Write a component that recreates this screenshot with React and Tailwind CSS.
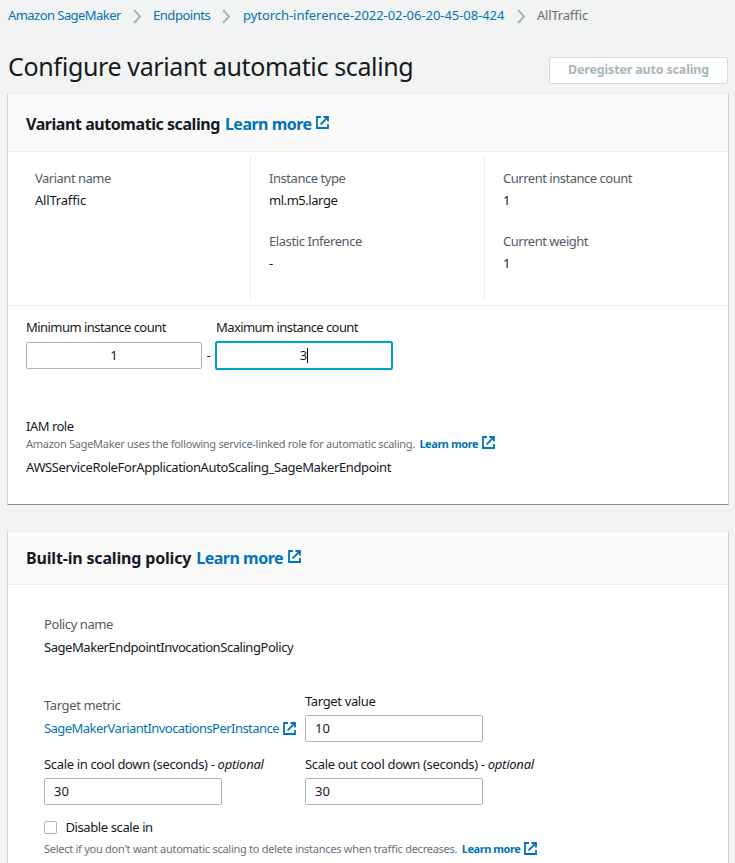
const chevronPath = 'M1 1 L7 7.5 L1 14';

function Chevron({ className }) {
  return (
    <svg className={`h-[15px] w-[9px] shrink-0 ${className}`} viewBox="0 0 9 15" fill="none" stroke="#aab7b8" strokeWidth="2">
      <path d={chevronPath} />
    </svg>
  );
}

function External({ className }) {
  return (
    <svg className={`size-[13px] shrink-0 text-[#0073bb] ${className}`} viewBox="0 0 13 13" fill="none" stroke="currentColor">
      <path d="M5 1H1V12H12V8" strokeWidth="1.8" />
      <path d="M7.5 1H12V5.5M12 1L4.6 8.4" strokeWidth="1.8" />
    </svg>
  );
}

function Field({ value, className }) {
  return (
    <div className={`flex h-[27px] items-center rounded-[2px] border border-[#aab7b8] bg-white pb-[2px] leading-[22px] ${className}`}>
      {value}
    </div>
  );
}

function Label({ children, className = 'tracking-[-0.45px]' }) {
  return <div className={`h-[22px] whitespace-nowrap leading-[20px] ${className}`}>{children}</div>;
}

function Card({ title, tracking, headerClass, iconClass, className, children }) {
  return (
    <section className={`ml-[7px] w-[722px] border border-t-[#eaeded] border-x-[#ccd3d3] border-b-[#879596] bg-white ${className}`}>
      <header className={`flex items-center border-b border-[#eaeded] bg-[#fafafa] pl-[18px] text-[16px] font-bold whitespace-nowrap ${headerClass}`}>
        <span className={tracking}>{title}</span>
        <a className="ml-[5px] text-[#0073bb] tracking-[-0.5px]">Learn more</a>
        <External className={`ml-[4.5px] ${iconClass}`} />
      </header>
      {children}
    </section>
  );
}

export default function App() {
  return (
    <div className="h-[863px] w-[735px] overflow-hidden bg-[#f2f3f3] font-['Noto_Sans','Open_Sans',sans-serif] text-[13px] text-[#16191f] [font-feature-settings:'liga']">
      <nav className="flex h-8 items-center whitespace-nowrap pl-2 text-[#0073bb]">
        <a className="w-[113px] tracking-[-0.55px]">Amazon SageMaker</a>
        <Chevron className="ml-3 mr-[11px]" />
        <a className="w-[58px] tracking-[-0.46px]">Endpoints</a>
        <Chevron className="ml-[11px] mr-3" />
        <a className="w-[262px] tracking-[-0.05px]">pytorch-inference-2022-02-06-20-45-08-424</a>
        <Chevron className="ml-3 mr-[11px]" />
        <span className="tracking-[-0.2px] text-[#687078]">AllTraffic</span>
      </nav>
      <div className="flex h-[61px] items-start justify-between pl-2 pr-[7px]">
        <h1 className="mt-4 whitespace-nowrap text-[25px] leading-9 tracking-[-0.37px]">Configure variant automatic scaling</h1>
        <button className="mt-[25px] h-[27px] w-[179px] whitespace-nowrap rounded-[2px] border border-[#d5dbdb] bg-white text-[12.5px] font-bold leading-none tracking-[-0.17px] text-[#aab7b8]">
          Deregister auto scaling
        </button>
      </div>

      <Card title="Variant automatic scaling" tracking="tracking-[-0.44px]" headerClass="h-[58px] pt-[3px]" iconClass="-mt-[4px]" className="h-[412px]">
        <div className="flex h-[154px] border-b border-[#eaeded] pt-1 pb-[6px]">
          <div className="w-[243px] border-r border-[#eaeded] pt-3 pl-[27px]">
            <Label className="tracking-[-0.5px] text-[#545b64]">Variant name</Label>
            <Label className="tracking-[-0.2px]">AllTraffic</Label>
          </div>
          <div className="w-[234px] border-r border-[#eaeded] pt-3 pl-[18px]">
            <Label className="tracking-[-0.45px] text-[#545b64]">Instance type</Label>
            <Label>ml.m5.large</Label>
            <Label className="mt-[19px] tracking-[-0.42px] text-[#545b64]">Elastic Inference</Label>
            <Label>-</Label>
          </div>
          <div className="pt-3 pl-[18px]">
            <Label className="tracking-[-0.48px] text-[#545b64]">Current instance count</Label>
            <Label>1</Label>
            <Label className="mt-[19px] tracking-[-0.48px] text-[#545b64]">Current weight</Label>
            <Label>1</Label>
          </div>
        </div>
        <div className="pt-[11px] pl-[18px]">
          <div className="flex">
            <Label className="w-[190px] tracking-[-0.54px]">Minimum instance count</Label>
            <Label className="tracking-[-0.57px]">Maximum instance count</Label>
          </div>
          <div className="mt-[2px] flex h-[29px] items-center">
            <Field value="1" className="w-[176px] justify-center" />
            <span className="w-[13px] text-center">-</span>
            <div className="flex h-[29px] w-[178px] items-center justify-center rounded-[2px] border-2 border-[#00a1c9]">
              3<span className="h-[15px] w-px bg-black" />
            </div>
          </div>
          <Label className="mt-[46px] tracking-[-0.5px]">IAM role</Label>
          <div className="-mt-[2px] flex h-4 items-center whitespace-nowrap text-[11px] text-[#687078]">
            <span className="tracking-[-0.28px]">Amazon SageMaker uses the following service-linked role for automatic scaling.</span>
            <a className="ml-[4.5px] font-bold tracking-[-0.44px] text-[#0073bb]">Learn more</a>
            <External className="ml-[3.5px] -mt-[3px]" />
          </div>
          <Label className="mt-[5px] tracking-[-0.39px]">AWSServiceRoleForApplicationAutoScaling_SageMakerEndpoint</Label>
        </div>
      </Card>

      <Card title="Built-in scaling policy" tracking="tracking-[-0.17px]" headerClass="h-[53px]" iconClass="-mt-[4px]" className="mt-[26px] h-[400px]">
        <div className="pt-[29px] pl-9">
          <Label className="tracking-[-0.41px] text-[#545b64]">Policy name</Label>
          <Label className="mt-px tracking-[-0.44px]">SageMakerEndpointInvocationScalingPolicy</Label>
          <div className="mt-8 flex h-[63px]">
            <div className="w-[261px] pt-1">
              <Label className="tracking-[-0.37px] text-[#545b64]">Target metric</Label>
              <div className="mt-px flex items-center">
                <Label className="w-[235px] tracking-[-0.54px] text-[#0073bb]">SageMakerVariantInvocationsPerInstance</Label>
                <External className="ml-[4px] -mt-px" />
              </div>
            </div>
            <div>
              <Label className="tracking-[-0.35px]">Target value</Label>
              <Field value="10" className="mt-[2px] w-[178px] pl-[9px]" />
            </div>
          </div>
          <div className="flex h-[63px]">
            <div className="w-[261px]">
              <Label className="tracking-[-0.34px]">Scale in cool down (seconds) - <i className="tracking-[-0.25px]">optional</i></Label>
              <Field value="30" className="mt-[2px] w-[178px] pl-[9px]" />
            </div>
            <div>
              <Label className="tracking-[-0.33px]">Scale out cool down (seconds) - <i className="tracking-[-0.25px]">optional</i></Label>
              <Field value="30" className="mt-[2px] w-[178px] pl-[9px]" />
            </div>
          </div>
          <div className="flex items-center">
            <span className="-mt-px size-[13px] rounded-[2px] border border-[#aab7b8] bg-white" />
            <Label className="ml-[8.5px] tracking-[-0.4px]">Disable scale in</Label>
          </div>
          <div className="mt-[2px] flex h-4 items-center whitespace-nowrap text-[11px] text-[#687078]">
            <span className="tracking-[-0.265px]">Select if you don't want automatic scaling to delete instances when traffic decreases.</span>
            <a className="ml-[4.5px] font-bold tracking-[-0.44px] text-[#0073bb]">Learn more</a>
            <External className="ml-[3.5px] -mt-[2px]" />
          </div>
        </div>
      </Card>
    </div>
  );
}
